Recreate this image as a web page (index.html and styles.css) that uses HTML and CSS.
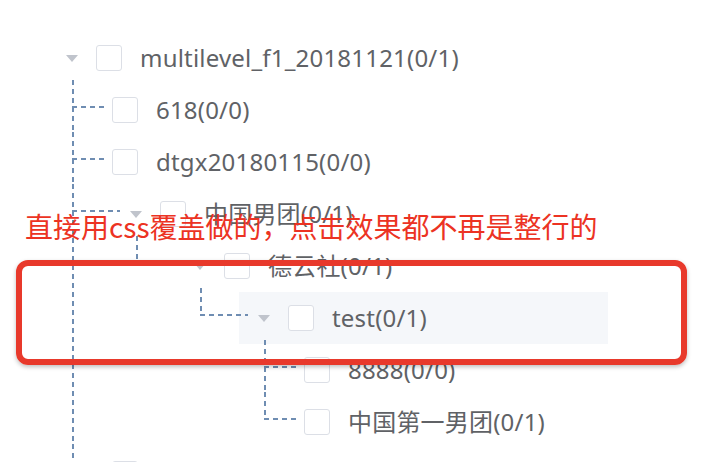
FILE: index.html
```html
<!DOCTYPE html>
<html lang="zh">
<head>
<meta charset="utf-8">
<title>tree</title>
<link rel="stylesheet" href="styles.css">
</head>
<body>
<div class="page">
  <div class="tree">
    <div class="node">
      <div class="row">
        <span class="arrow"></span><span class="checkbox"></span><span class="label">multilevel_f1_20181121(0/1)</span>
      </div>
      <div class="children">
        <div class="node leaf">
          <div class="row"><span class="checkbox"></span><span class="label">618(0/0)</span></div>
        </div>
        <div class="node leaf">
          <div class="row"><span class="checkbox"></span><span class="label">dtgx20180115(0/0)</span></div>
        </div>
        <div class="node">
          <div class="row"><span class="arrow"></span><span class="checkbox"></span><span class="label">中国男团(0/1)</span></div>
          <div class="children">
            <div class="node">
              <div class="row"><span class="arrow"></span><span class="checkbox"></span><span class="label">德云社(0/1)</span></div>
              <div class="children">
                <div class="node">
                  <div class="row current"><span class="arrow"></span><span class="checkbox"></span><span class="label">test(0/1)</span></div>
                  <div class="children">
                    <div class="node leaf">
                      <div class="row"><span class="checkbox"></span><span class="label">8888(0/0)</span></div>
                    </div>
                    <div class="node leaf">
                      <div class="row"><span class="checkbox"></span><span class="label">中国第一男团(0/1)</span></div>
                    </div>
                  </div>
                </div>
              </div>
            </div>
          </div>
        </div>
        <div class="node leaf">
          <div class="row"><span class="checkbox"></span><span class="label"></span></div>
        </div>
      </div>
    </div>
  </div>
  <div class="note">直接用css覆盖做的，点击效果都不再是整行的</div>
  <div class="frame"></div>
</div>
</body>
</html>
```

FILE: styles.css
```css
html, body {
  margin: 0;
  padding: 0;
  background: #ffffff;
}

.page {
  position: relative;
  width: 704px;
  height: 462px;
  overflow: hidden;
  font-family: "Noto Sans", "Noto Sans CJK SC", sans-serif;
}

.tree {
  padding: 32px 0 0 47px;
  color: #606266;
  font-size: 24px;
  letter-spacing: 0.2px;
}

.node {
  position: relative;
}

.row {
  position: relative;
  display: flex;
  align-items: center;
  width: 356px;
  height: 52px;
  padding-left: 13px;
}

.row.current {
  background: #f5f7fa;
}

.arrow {
  flex: none;
  width: 24px;
  height: 24px;
  margin-right: 12px;
  display: flex;
  align-items: center;
  justify-content: center;
}

.arrow::before {
  content: "";
  width: 0;
  height: 0;
  border-left: 6px solid transparent;
  border-right: 6px solid transparent;
  border-top: 7px solid #c0c4cc;
}

.checkbox {
  flex: none;
  box-sizing: border-box;
  width: 26px;
  height: 26px;
  border: 1px solid #dcdfe6;
  border-radius: 3px;
  background: #fff;
}

.leaf > .row .checkbox {
  margin-left: -12px;
}

.label {
  margin-left: 18px;
  white-space: nowrap;
  line-height: 30px;
}

.children {
  margin-left: 64px;
}

/* vertical guide */
.children > .node::before {
  content: "";
  position: absolute;
  left: -39px;
  top: -4px;
  bottom: 0;
  width: 2px;
  background: repeating-linear-gradient(to bottom, #6f8db2 0 5px, transparent 5px 9px);
}

.children > .node:last-child::before {
  bottom: auto;
  height: 28px;
}

/* horizontal guide */
.children > .node > .row::after {
  content: "";
  position: absolute;
  left: -39px;
  top: 22px;
  width: 48px;
  height: 2px;
  background: repeating-linear-gradient(to right, #6f8db2 0 5px, transparent 5px 9px);
}

.children > .node.leaf > .row::after {
  width: 36px;
}

.note {
  position: absolute;
  left: 25px;
  top: 206px;
  font-family: "Noto Sans CJK SC", sans-serif;
  font-size: 28px;
  line-height: 40px;
  color: #ec3323;
  white-space: nowrap;
}

.frame {
  position: absolute;
  left: 16px;
  top: 260px;
  width: 659px;
  height: 93px;
  border: 6px solid #e8392b;
  border-radius: 12px;
  box-shadow: 0 2px 4px rgba(0, 0, 0, 0.25);
}
```
